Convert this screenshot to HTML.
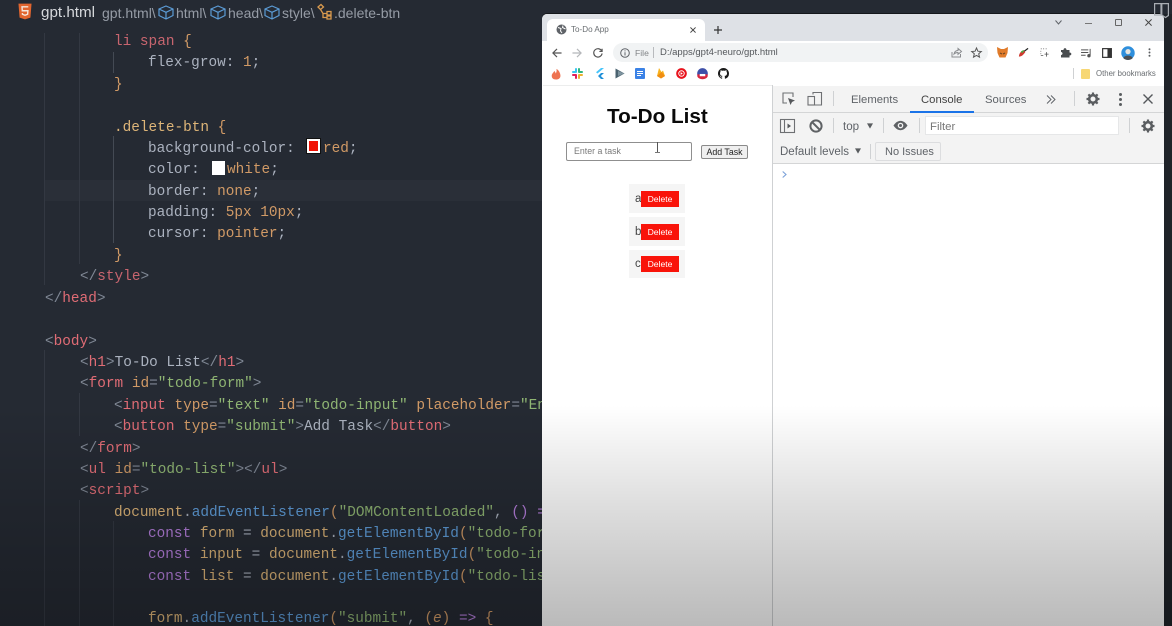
<!DOCTYPE html>
<html><head><meta charset="utf-8">
<style>
html,body{margin:0;padding:0;width:1172px;height:626px;overflow:hidden;background:#22272f}
*{box-sizing:border-box}
#root{position:relative;width:1172px;height:626px;overflow:hidden;background:#252a33;font-family:"Liberation Sans",sans-serif}
.l{position:absolute;font:14.4px/21px "Liberation Mono",monospace;white-space:pre;color:#abb2bf;height:21px;filter:blur(.25px)}
.r{color:#c8656f}.o{color:#d19a66}.y{color:#deb578}.g{color:#8fb573}.b{color:#5f9edb}.p{color:#b57edc}.w{color:#abb2bf}.t{color:#7f8794}.h{color:#e06c75}
.a{position:absolute;white-space:nowrap}
.v{position:absolute;width:1px;background:#333842}
svg{position:absolute;overflow:visible}
.dv{position:absolute;width:1px;background:#cfd1d3}
.bc{position:absolute;white-space:nowrap;top:5px;font-size:14px;line-height:17px;color:#969ca6}
.dt{position:absolute;white-space:nowrap;font-size:11.3px;line-height:14px;color:#5f6368}
</style></head><body><div id="root">

<!-- editor header -->
<svg style="left:18px;top:3px" width="14" height="17" viewBox="0 0 15 18"><path d="M0.5 0.5H14.5L13.3 15.5L7.5 17.5L1.7 15.5Z" fill="#e1652f"/><path d="M11 4H4.3L4.6 8.2H10.6L10.3 12L7.5 13L4.8 12L4.7 10.6" fill="none" stroke="#f5e6dc" stroke-width="1.5"/></svg>
<div class="a" style="left:41px;top:4px;font-size:15.2px;line-height:18px;color:#d6d8dc">gpt.html</div>
<div class="bc" style="left:102px">gpt.html\</div>
<svg style="left:158px;top:5px" width="16" height="15" viewBox="0 0 16 15" fill="none" stroke="#5b9bd5" stroke-width="1.2"><path d="M8 1L15 4V10.5L8 14L1 10.5V4ZM1 4L8 7.3L15 4M8 7.3V14"/></svg>
<div class="bc" style="left:176px">html\</div>
<svg style="left:210px;top:5px" width="16" height="15" viewBox="0 0 16 15" fill="none" stroke="#5b9bd5" stroke-width="1.2"><path d="M8 1L15 4V10.5L8 14L1 10.5V4ZM1 4L8 7.3L15 4M8 7.3V14"/></svg>
<div class="bc" style="left:228px">head\</div>
<svg style="left:264px;top:5px" width="16" height="15" viewBox="0 0 16 15" fill="none" stroke="#5b9bd5" stroke-width="1.2"><path d="M8 1L15 4V10.5L8 14L1 10.5V4ZM1 4L8 7.3L15 4M8 7.3V14"/></svg>
<div class="bc" style="left:282px">style\</div>
<svg style="left:316px;top:3px" width="16" height="17" viewBox="0 0 16 17" fill="none" stroke="#d99a4e" stroke-width="1.3"><path d="M2 4L5 1.5L7.5 4L4.5 6.5ZM4.5 6.5L7 10.5H11M7 10.5V14.5H11M11 8.5H15V12H11ZM11 13H15V16H11Z"/></svg>
<div class="bc" style="left:334px">.delete-btn</div>

<!-- highlight line -->
<div class="a" style="left:44px;top:180px;width:498px;height:21px;background:#2a2f38"></div>

<!-- indent guides -->
<div class="v" style="left:44px;top:33px;height:252px"></div>
<div class="v" style="left:79px;top:33px;height:231px"></div>
<div class="v" style="left:113px;top:52px;height:21px;background:#444a54"></div>
<div class="v" style="left:113px;top:136px;height:107px;background:#444a54"></div>
<div class="v" style="left:44px;top:350px;height:276px"></div>
<div class="v" style="left:79px;top:393px;height:43px"></div>
<div class="v" style="left:79px;top:500px;height:126px"></div>
<div class="v" style="left:113px;top:521px;height:105px"></div>

<!-- code -->
<div class="a" style="left:0;top:2px;width:542px;height:624px">
<div class="l" style="left:114px;top:30px"><span class="r">li</span> <span class="r">span</span> <span class="o">{</span></div>
<div class="l" style="left:148px;top:51px">flex-grow: <span class="o">1</span>;</div>
<div class="l o" style="left:114px;top:73px">}</div>
<div class="l y" style="left:114px;top:116px">.delete-btn <span class="o">{</span></div>
<div class="l" style="left:148px;top:137px">background-color:</div>
<div class="a" style="left:307px;top:137px;width:13px;height:14px;background:#f01205;border:2px solid #fff;outline:1px solid #111"></div>
<div class="l" style="left:323px;top:137px"><span class="o">red</span>;</div>
<div class="l" style="left:148px;top:158px">color:</div>
<div class="a" style="left:212px;top:159px;width:13px;height:14px;background:#fff"></div>
<div class="l" style="left:227px;top:158px"><span class="o">white</span>;</div>
<div class="l" style="left:148px;top:180px">border: <span class="o">none</span>;</div>
<div class="l" style="left:148px;top:201px">padding: <span class="o">5px 10px</span>;</div>
<div class="l" style="left:148px;top:222px">cursor: <span class="o">pointer</span>;</div>
<div class="l o" style="left:114px;top:244px">}</div>
<div class="l" style="left:80px;top:265px"><span class="t">&lt;/</span><span class="r">style</span><span class="t">&gt;</span></div>
<div class="l" style="left:45px;top:287px"><span class="t">&lt;/</span><span class="h">head</span><span class="t">&gt;</span></div>
<div class="l" style="left:45px;top:330px"><span class="t">&lt;</span><span class="h">body</span><span class="t">&gt;</span></div>
<div class="l" style="left:80px;top:351px"><span class="t">&lt;</span><span class="h">h1</span><span class="t">&gt;</span>To-Do List<span class="t">&lt;/</span><span class="h">h1</span><span class="t">&gt;</span></div>
<div class="l" style="left:80px;top:372px"><span class="t">&lt;</span><span class="h">form</span> <span class="o">id</span><span class="t">=</span><span class="g">"todo-form"</span><span class="t">&gt;</span></div>
<div class="l" style="left:114px;top:394px"><span class="t">&lt;</span><span class="h">input</span> <span class="o">type</span><span class="t">=</span><span class="g">"text"</span> <span class="o">id</span><span class="t">=</span><span class="g">"todo-input"</span> <span class="o">placeholder</span><span class="t">=</span><span class="g">"Enter a task"</span></div>
<div class="l" style="left:114px;top:415px"><span class="t">&lt;</span><span class="h">button</span> <span class="o">type</span><span class="t">=</span><span class="g">"submit"</span><span class="t">&gt;</span>Add Task<span class="t">&lt;/</span><span class="h">button</span><span class="t">&gt;</span></div>
<div class="l" style="left:80px;top:437px"><span class="t">&lt;/</span><span class="h">form</span><span class="t">&gt;</span></div>
<div class="l" style="left:80px;top:458px"><span class="t">&lt;</span><span class="h">ul</span> <span class="o">id</span><span class="t">=</span><span class="g">"todo-list"</span><span class="t">&gt;&lt;/</span><span class="h">ul</span><span class="t">&gt;</span></div>
<div class="l" style="left:80px;top:479px"><span class="t">&lt;</span><span class="h">script</span><span class="t">&gt;</span></div>
<div class="l" style="left:114px;top:501px"><span class="y">document</span>.<span class="b">addEventListener</span><span class="o">(</span><span class="g">"DOMContentLoaded"</span>, <span class="p">()</span> <span class="p">=&gt;</span> <span class="o">{</span></div>
<div class="l" style="left:148px;top:522px"><span class="p">const</span> <span class="y">form</span> = <span class="y">document</span>.<span class="b">getElementById</span><span class="o">(</span><span class="g">"todo-form"</span><span class="o">)</span>;</div>
<div class="l" style="left:148px;top:543px"><span class="p">const</span> <span class="y">input</span> = <span class="y">document</span>.<span class="b">getElementById</span><span class="o">(</span><span class="g">"todo-input"</span><span class="o">)</span>;</div>
<div class="l" style="left:148px;top:565px"><span class="p">const</span> <span class="y">list</span> = <span class="y">document</span>.<span class="b">getElementById</span><span class="o">(</span><span class="g">"todo-list"</span><span class="o">)</span>;</div>
<div class="l" style="left:148px;top:607px"><span class="y">form</span>.<span class="b">addEventListener</span><span class="o">(</span><span class="g">"submit"</span>, <span class="o">(</span><span class="o"><i>e</i></span><span class="o">)</span> <span class="p">=&gt;</span> <span class="o">{</span></div>
</div>

<!-- right-side dark strip -->
<div class="a" style="left:1164px;top:14px;width:8px;height:612px;background:#1f2329"></div>

<!-- browser window -->
<div class="a" style="left:542px;top:14px;width:622px;height:612px;background:#fff;border-radius:5px 5px 0 0;overflow:hidden;box-shadow:0 -1px 0 #14171b">
  <div class="a" style="left:0;top:0;width:622px;height:27px;background:#dee1e6"></div>
  <div class="a" style="left:5px;top:5px;width:158px;height:22px;background:#fff;border-radius:6px 6px 0 0"></div>
</div>
<svg style="left:1154px;top:3px" width="15" height="15" viewBox="0 0 15 15" fill="none" stroke="#a9adb3" stroke-width="1.2"><path d="M.6 .6H7V12H.6ZM7.8 .6H14.4V12.5L11.5 14.5L7.8 12Z"/></svg>
<svg style="left:556px;top:24px" width="11" height="11" viewBox="0 0 11 11"><circle cx="5.5" cy="5.5" r="5" fill="#5f6368"/><path d="M2 3.5L5 4.5L4.5 7L6 9M7 1.5L6.5 3.5L9.5 5" stroke="#fff" stroke-width="1" fill="none"/></svg>
<div class="a" style="left:571px;top:24px;font-size:8.1px;line-height:12px;color:#6a6e72">To-Do App</div>
<svg style="left:690px;top:27px" width="6" height="6" viewBox="0 0 7 7" stroke="#444" stroke-width="1.2"><path d="M.5 .5L6.5 6.5M6.5 .5L.5 6.5"/></svg>
<svg style="left:714px;top:26px" width="8" height="8" viewBox="0 0 10 10" stroke="#333" stroke-width="1.5"><path d="M5 0V10M0 5H10"/></svg>
<!-- window controls -->
<svg style="left:1055px;top:20px" width="7" height="5" viewBox="0 0 7 5" fill="none" stroke="#5f6368" stroke-width="1"><path d="M.5 .5L3.5 4L6.5 .5"/></svg>
<div class="a" style="left:1085px;top:23px;width:7px;height:1px;background:#777"></div>
<div class="a" style="left:1115px;top:19px;width:7px;height:7px;border:1px solid #666;border-radius:1px"></div>
<svg style="left:1145px;top:19px" width="7" height="7" viewBox="0 0 9 9" stroke="#444" stroke-width="1.2"><path d="M.5 .5L8.5 8.5M8.5 .5L.5 8.5"/></svg>

<!-- toolbar -->
<svg style="left:552px;top:48px" width="10" height="10" viewBox="0 0 11 11" fill="none" stroke="#555" stroke-width="1.3"><path d="M10.5 5.5H1M5.5 1L1 5.5L5.5 10"/></svg>
<svg style="left:572px;top:48px" width="10" height="10" viewBox="0 0 11 11" fill="none" stroke="#b5b7ba" stroke-width="1.3"><path d="M.5 5.5H10M5.5 1L10 5.5L5.5 10"/></svg>
<svg style="left:593px;top:48px" width="10" height="10" viewBox="0 0 11 11" fill="none" stroke="#555" stroke-width="1.3"><path d="M9.6 3.4A4.6 4.6 0 1 0 10 6"/><path d="M10 .8V3.8H7" /></svg>
<div class="a" style="left:613px;top:43px;width:375px;height:19px;border-radius:9.5px;background:#f1f3f4"></div>
<svg style="left:620px;top:48px" width="10" height="10" viewBox="0 0 10 10" fill="none" stroke="#5f6368" stroke-width="1"><circle cx="5" cy="5" r="4.3"/><path d="M5 4.2V7.5M5 2.4V3.4"/></svg>
<div class="a" style="left:635px;top:47px;font-size:8.6px;line-height:12px;color:#808386">File</div>
<div class="a" style="left:653px;top:47px;width:1px;height:11px;background:#b8babd"></div>
<div class="a" style="left:660px;top:47px;font-size:9.5px;line-height:12px;color:#55585c">D:/apps/gpt4-neuro/gpt.html</div>
<svg style="left:951px;top:47px" width="11" height="11" viewBox="0 0 11 11" fill="none" stroke="#8a8c8f" stroke-width="1"><path d="M1 5V10H9.5V7M3 7C3.5 4.5 5 3.5 7 3.5V1.5L10.5 4.5L7 7.3V5.5C5.5 5.5 4 6 3 7Z"/></svg>
<svg style="left:971px;top:47px" width="11" height="11" viewBox="0 0 11 11" fill="none" stroke="#555" stroke-width="1"><path d="M5.5 1L6.9 4.2L10.3 4.5L7.7 6.8L8.5 10.1L5.5 8.4L2.5 10.1L3.3 6.8L.7 4.5L4.1 4.2Z"/></svg>
<svg style="left:997px;top:47px" width="11" height="11" viewBox="0 0 11 11"><path d="M0 0L4 2H7L11 0L10.5 6L8.5 10.5H2.5L.5 6Z" fill="#e07b2a"/><path d="M3 6L5 7M8 6L6 7" stroke="#6b4520" stroke-width="1"/></svg>
<svg style="left:1018px;top:47px" width="11" height="11" viewBox="0 0 12 11"><path d="M1 10C1 7 3 4 6 3L8 5C6 8 4 10 1 10Z" fill="#cf3a30"/><path d="M3 5C4 3 6 3 7 3L5 6Z" fill="#49a846"/><path d="M7 4L11 1" stroke="#222" stroke-width="1.3"/></svg>
<svg style="left:1040px;top:48px" width="9" height="9" viewBox="0 0 11 11" stroke="#555" stroke-width="1" fill="none"><path d="M1 1H2M4 1H5M7 1H8M1 3.5V4.5M1 6.5V7.5M1 9H4M8 5V10.5M5.5 7.5H10.5"/></svg>
<svg style="left:1060px;top:47px" width="11" height="11" viewBox="0 0 11 11"><path d="M1 3H3.5C3.5 .5 6.5 .5 6.5 3H9.5V5.5C12 5.5 12 8.5 9.5 8.5V10.5H1V8C3 8 3 5 1 5Z" fill="#4a4d50"/></svg>
<svg style="left:1081px;top:48px" width="11" height="10" viewBox="0 0 12 11" stroke="#555" stroke-width="1.1" fill="none"><path d="M0 2H8M0 5H8M0 8H5M10 1V8"/><circle cx="8.7" cy="8.5" r="1.3" fill="#555"/></svg>
<svg style="left:1102px;top:48px" width="10" height="10" viewBox="0 0 11 11"><rect x=".7" y=".7" width="9.6" height="9.6" fill="none" stroke="#333" stroke-width="1.3"/><rect x="6" y="1" width="4" height="9" fill="#333"/></svg>
<svg style="left:1121px;top:46px" width="14" height="14" viewBox="0 0 15 15"><circle cx="7.5" cy="7.5" r="7.2" fill="#2f8fdc"/><circle cx="7.5" cy="6" r="2.8" fill="#e7e4df"/><path d="M2.5 13C3.5 9.5 11.5 9.5 12.5 13A7.2 7.2 0 0 1 2.5 13Z" fill="#4a4f55"/></svg>
<svg style="left:1148px;top:48px" width="3" height="9" viewBox="0 0 3 11" fill="#5a5d60"><circle cx="1.5" cy="1.5" r="1.2"/><circle cx="1.5" cy="5.5" r="1.2"/><circle cx="1.5" cy="9.5" r="1.2"/></svg>

<!-- bookmarks -->
<svg style="left:551px;top:68px" width="10" height="12" viewBox="0 0 11 13"><path d="M5.5 12.5C2 12.5 .8 10.5 .8 8.5C.8 6 3 5 3.5 3.2C4.8 4 5 5 5 6C6 5 6.5 3 6 .8C9 2.5 10.4 6 10.4 8.5C10.4 11 8.5 12.5 5.5 12.5Z" fill="#ee7351"/></svg>
<svg style="left:572px;top:68px" width="11" height="11" viewBox="0 0 11 11" stroke-width="2" stroke-linecap="round"><path d="M4 1V4" stroke="#36c5f0"/><path d="M1 4H3" stroke="#36c5f0"/><path d="M10 4H7.5" stroke="#2eb67d"/><path d="M7 1V4" stroke="#2eb67d"/><path d="M7 10V7" stroke="#ecb22e"/><path d="M10 7H8" stroke="#ecb22e"/><path d="M4 10V7" stroke="#e01e5a"/><path d="M1 7H3.5" stroke="#e01e5a"/></svg>
<svg style="left:595px;top:68px" width="9" height="11" viewBox="0 0 9 11"><path d="M6 0H9L2.5 5.5L1 4.3Z" fill="#47c5fb"/><path d="M9 5H6L3 8L6 11H9L5.8 8Z" fill="#1f8fd8"/></svg>
<svg style="left:615px;top:68px" width="10" height="11" viewBox="0 0 10 11"><path d="M.5 .5L9.5 5.5L.5 10.5Z" fill="#4b6370"/><path d="M3 3L9.5 5.5L3 8Z" fill="#7f95a0"/></svg>
<div class="a" style="left:635px;top:68px;width:10px;height:11px;border-radius:1px;background:#3b82e6"></div>
<div class="a" style="left:637px;top:71px;width:6px;height:1px;background:#fff"></div>
<div class="a" style="left:637px;top:73px;width:6px;height:1px;background:#fff"></div>
<div class="a" style="left:637px;top:75px;width:4px;height:1px;background:#fff"></div>
<svg style="left:656px;top:67px" width="10" height="12" viewBox="0 0 10 12"><path d="M1 9L3 1L5.5 5L7 3.5L9 9L5 11.5Z" fill="#f7b21e"/><path d="M1 9L5 11.5L9 9L5.5 5Z" fill="#f08d12"/></svg>
<svg style="left:676px;top:68px" width="11" height="11" viewBox="0 0 12 12"><circle cx="6" cy="6" r="5.8" fill="#e8121c"/><circle cx="6" cy="6" r="3" fill="none" stroke="#fff" stroke-width="1"/><path d="M5 4.5L7.5 6L5 7.5Z" fill="#fff"/></svg>
<svg style="left:697px;top:68px" width="11" height="11" viewBox="0 0 12 12"><circle cx="6" cy="6" r="5.8" fill="#3e4fa8"/><path d="M.3 7H11.7V9A5.8 4 0 0 1 .3 9Z" fill="#d7263d"/><rect x="3" y="6.5" width="6" height="2.5" fill="#fff"/></svg>
<svg style="left:718px;top:68px" width="11" height="11" viewBox="0 0 16 16"><path fill="#1a1a1a" d="M8 0C3.58 0 0 3.58 0 8c0 3.54 2.29 6.53 5.47 7.59.4.07.55-.17.55-.38 0-.19-.01-.82-.01-1.49-2.01.37-2.53-.49-2.69-.94-.09-.23-.48-.94-.82-1.13-.28-.15-.68-.52-.01-.53.63-.01 1.08.58 1.23.82.72 1.21 1.87.87 2.33.66.07-.52.28-.87.51-1.07-1.78-.2-3.64-.89-3.64-3.95 0-.87.31-1.59.82-2.15-.08-.2-.36-1.02.08-2.12 0 0 .67-.21 2.2.82.64-.18 1.32-.27 2-.27s1.36.09 2 .27c1.53-1.04 2.2-.82 2.2-.82.44 1.1.16 1.92.08 2.12.51.56.82 1.27.82 2.15 0 3.07-1.87 3.75-3.65 3.95.29.25.54.73.54 1.48 0 1.07-.01 1.93-.01 2.2 0 .21.15.46.55.38A8.01 8.01 0 0 0 16 8c0-4.42-3.58-8-8-8z"/></svg>
<div class="dv" style="left:1073px;top:68px;height:11px"></div>
<div class="a" style="left:1081px;top:69px;width:9px;height:10px;background:#f7d774;border-radius:1px"></div>
<div class="a" style="left:1096px;top:68px;font-size:7.8px;line-height:12px;color:#6a6e72">Other bookmarks</div>

<div class="a" style="left:543px;top:85px;width:621px;height:1px;background:#eceded"></div>

<!-- page -->
<div class="a" style="left:607px;top:103px;font-size:20.7px;line-height:28px;font-weight:bold;color:#0a0a0a">To-Do List</div>
<div class="a" style="left:566px;top:142px;width:126px;height:19px;border:1px solid #8f8f8f;border-radius:2px;background:#fff"></div>
<div class="a" style="left:574px;top:145px;font-size:8.8px;line-height:13px;color:#7a7a7a">Enter a task</div>
<div class="a" style="left:657px;top:142px;width:1px;height:10px;background:#555"></div>
<div class="a" style="left:655px;top:152px;width:5px;height:1px;background:#777"></div>
<div class="a" style="left:701px;top:145px;width:47px;height:14px;border:1px solid #8a8a8a;border-radius:2px;background:#efefef;font-size:8.8px;line-height:12px;text-align:center;color:#222">Add Task</div>

<div class="a" style="left:629px;top:184px;width:56px;height:29px;background:#f5f5f5"></div>
<div class="a" style="left:629px;top:217px;width:56px;height:29px;background:#f5f5f5"></div>
<div class="a" style="left:629px;top:250px;width:56px;height:28px;background:#f5f5f5"></div>
<div class="a" style="left:635px;top:192px;font-size:11.5px;line-height:14px;color:#444">a</div>
<div class="a" style="left:635px;top:225px;font-size:11.5px;line-height:14px;color:#444">b</div>
<div class="a" style="left:635px;top:257px;font-size:11.5px;line-height:14px;color:#444">c</div>
<div class="a" style="left:641px;top:191px;width:38px;height:16px;background:#f9140a;color:#fff;font-size:8.6px;line-height:16px;text-align:center">Delete</div>
<div class="a" style="left:641px;top:224px;width:38px;height:16px;background:#f9140a;color:#fff;font-size:8.6px;line-height:16px;text-align:center">Delete</div>
<div class="a" style="left:641px;top:256px;width:38px;height:16px;background:#f9140a;color:#fff;font-size:8.6px;line-height:16px;text-align:center">Delete</div>

<!-- devtools -->
<div class="a" style="left:772px;top:85px;width:392px;height:541px;background:#fff;border-left:1px solid #cfd1d3"></div>
<div class="a" style="left:773px;top:86px;width:391px;height:78px;background:#f3f3f3"></div>
<div class="a" style="left:773px;top:112px;width:391px;height:1px;background:#d4d5d6"></div>
<div class="a" style="left:773px;top:163px;width:391px;height:1px;background:#d4d5d6"></div>

<svg style="left:782px;top:92px" width="14" height="14" viewBox="0 0 14 14" fill="none" stroke="#6e7073" stroke-width="1.1"><path d="M5 11H1V1H11V5"/><path d="M6 6L13 8.5L10 10L8.5 13Z" fill="#55585b" stroke="none"/></svg>
<svg style="left:807px;top:91px" width="16" height="15" viewBox="0 0 16 15" fill="none" stroke="#6e7073" stroke-width="1.1"><path d="M6 3.5V1.5H14.5V14H6"/><rect x="1" y="5.5" width="6.5" height="8.5"/></svg>
<div class="dv" style="left:833px;top:91px;height:15px"></div>
<div class="dt" style="left:851px;top:93px">Elements</div>
<div class="dt" style="left:921px;top:93px;color:#444">Console</div>
<div class="a" style="left:910px;top:111px;width:64px;height:2px;background:#1a73e8"></div>
<div class="dt" style="left:985px;top:93px">Sources</div>
<svg style="left:1046px;top:95px" width="10" height="9" viewBox="0 0 10 9" fill="none" stroke="#5f6368" stroke-width="1"><path d="M1 .5L5 4.5L1 8.5M5 .5L9 4.5L5 8.5"/></svg>
<div class="dv" style="left:1074px;top:91px;height:15px"></div>
<svg style="left:1086px;top:92px" width="14" height="14" viewBox="0 0 14 14"><circle cx="7" cy="7" r="3.8" fill="none" stroke="#5a5d60" stroke-width="2.6"/><path d="M7 .5V3M7 11V13.5M.5 7H3M11 7H13.5M2.4 2.4L4 4M10 10L11.6 11.6M11.6 2.4L10 4M4 10L2.4 11.6" stroke="#5a5d60" stroke-width="2.2"/></svg>
<svg style="left:1119px;top:93px" width="3" height="13" viewBox="0 0 3 13" fill="#5a5d60"><circle cx="1.5" cy="1.5" r="1.5"/><circle cx="1.5" cy="6.5" r="1.5"/><circle cx="1.5" cy="11.5" r="1.5"/></svg>
<svg style="left:1143px;top:94px" width="10" height="10" viewBox="0 0 10 10" stroke="#55585b" stroke-width="1.4"><path d="M.5 .5L9.5 9.5M9.5 .5L.5 9.5"/></svg>

<svg style="left:780px;top:119px" width="15" height="14" viewBox="0 0 15 14" fill="none" stroke="#6e7073" stroke-width="1.1"><rect x=".5" y=".5" width="14" height="13"/><path d="M4.5 .5V13.5"/><path d="M7.5 4.5L11 7L7.5 9.5Z" fill="#55585b" stroke="none"/></svg>
<svg style="left:809px;top:119px" width="14" height="14" viewBox="0 0 14 14" fill="none" stroke="#5f6265" stroke-width="2"><circle cx="7" cy="7" r="5.6"/><path d="M3 3L11 11"/></svg>
<div class="dv" style="left:833px;top:118px;height:15px"></div>
<div class="dt" style="left:843px;top:120px;font-size:11.6px">top</div>
<svg style="left:867px;top:123px" width="6" height="6" viewBox="0 0 8 7" fill="#5a5d60"><path d="M0 0H8L4 7Z"/></svg>
<div class="dv" style="left:883px;top:118px;height:15px"></div>
<svg style="left:893px;top:120px" width="15" height="11" viewBox="0 0 16 11"><path d="M.5 5.5C3 1.8 5.5 .5 8 .5S13 1.8 15.5 5.5C13 9.2 10.5 10.5 8 10.5S3 9.2 .5 5.5Z" fill="#5f6265"/><circle cx="8" cy="5.5" r="3" fill="#f3f3f3"/><circle cx="8" cy="5.5" r="1.6" fill="#5f6265"/></svg>
<div class="dv" style="left:919px;top:118px;height:15px"></div>
<div class="a" style="left:925px;top:116px;width:194px;height:19px;background:#fff;border:1px solid #e6e7e8"></div>
<div class="dt" style="left:930px;top:120px;font-size:11.4px;color:#777">Filter</div>
<div class="dv" style="left:1129px;top:118px;height:15px"></div>
<svg style="left:1141px;top:119px" width="14" height="14" viewBox="0 0 14 14"><circle cx="7" cy="7" r="3.8" fill="none" stroke="#5a5d60" stroke-width="2.6"/><path d="M7 .5V3M7 11V13.5M.5 7H3M11 7H13.5M2.4 2.4L4 4M10 10L11.6 11.6M11.6 2.4L10 4M4 10L2.4 11.6" stroke="#5a5d60" stroke-width="2.2"/></svg>

<div class="dt" style="left:780px;top:145px;font-size:11.5px">Default levels</div>
<svg style="left:855px;top:148px" width="6" height="6" viewBox="0 0 8 7" fill="#5a5d60"><path d="M0 0H8L4 7Z"/></svg>
<div class="dv" style="left:870px;top:144px;height:15px"></div>
<div class="a" style="left:875px;top:142px;width:66px;height:19px;border:1px solid #dcdddf;border-radius:2px"></div>
<div class="dt" style="left:885px;top:145px;font-size:11px">No Issues</div>
<svg style="left:782px;top:171px" width="5" height="7" viewBox="0 0 5 7" fill="none" stroke="#7aa0d8" stroke-width="1.1"><path d="M.7 .5L4 3.5L.7 6.5"/></svg>

<!-- video gradient overlay -->
<div class="a" style="left:0;top:405px;width:1172px;height:221px;background:linear-gradient(to bottom,rgba(0,0,0,0),rgba(0,0,0,.13) 45%,rgba(0,0,0,.27))"></div>
</div></body></html>
